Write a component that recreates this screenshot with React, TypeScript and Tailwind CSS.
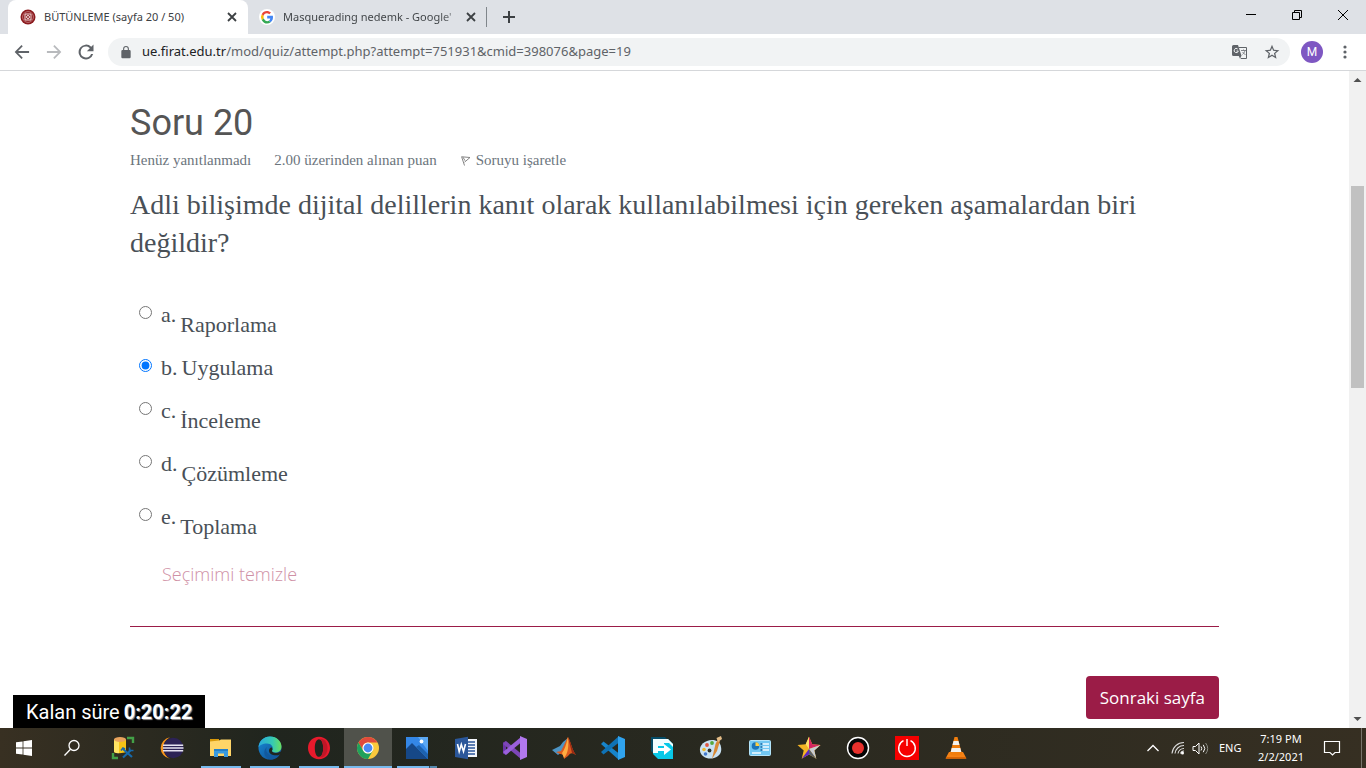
import type { ReactNode } from "react";
import { useState } from "react";

const SERIF = "font-['Georgia','Liberation_Serif',serif]";
const UI = "font-['Segoe_UI','Open_Sans',sans-serif]";
const CHROME = "font-['Segoe_UI','Noto_Sans',sans-serif]";

type Option = { letter: string; text: string; lowered: boolean };

const OPTIONS: Option[] = [
  { letter: "a.", text: "Raporlama", lowered: true },
  { letter: "b.", text: "Uygulama", lowered: false },
  { letter: "c.", text: "İnceleme", lowered: true },
  { letter: "d.", text: "Çözümleme", lowered: true },
  { letter: "e.", text: "Toplama", lowered: true },
];

function Svg({ size = 24, box = "0 0 24 24", children }: { size?: number; box?: string; children: ReactNode }) {
  return (
    <svg width={size} height={size} viewBox={box} fill="none" aria-hidden="true" className="shrink-0">
      {children}
    </svg>
  );
}

function CloseIcon() {
  return (
    <Svg size={10} box="0 0 10 10">
      <path d="M1 1l8 8M9 1l-8 8" stroke="#3c4043" strokeWidth="1.8" />
    </Svg>
  );
}

function GoogleIcon() {
  return (
    <Svg size={16} box="0 0 16 16">
      <circle cx="8" cy="8" r="8" fill="#fff" />
      <path d="M8.200 6.800h5.700c.5 3-.5 5.200-2.200 6.500l-2-1.500c.8-.5 1.400-1.300 1.600-2.400H8.200z" fill="#4285f4" />
      <path d="M2.700 10.900l2-1.600c1 2.800 3.600 3.500 5 2.500l2 1.500c-2.900 2.300-7.100 1.500-9-2.400z" fill="#34a853" />
      <path d="M2.700 5.200a6.100 6.100 0 000 5.700l2-1.600a4 4 0 010-2.600z" fill="#fbbc05" />
      <path d="M2.700 5.200c1.900-3.600 6.400-4.200 9.300-1.600l-1.700 1.700C8.300 3.600 5.500 4.300 4.700 6.700z" fill="#ea4335" />
    </Svg>
  );
}

function UniversityIcon() {
  return (
    <Svg size={16} box="0 0 16 16">
      <circle cx="8" cy="8" r="7.500" fill="#8b1a1e" />
      <circle cx="8" cy="8" r="5.400" stroke="#c98486" strokeWidth=".8" />
      <path d="M5 5h6v6H5z" stroke="#f2dfdf" strokeWidth="1" />
      <circle cx="8" cy="8" r="1.500" stroke="#f2dfdf" strokeWidth="1" />
    </Svg>
  );
}

function BrowserTabs() {
  const win = "flex h-[30px] w-[46px] items-center justify-center";
  return (
    <header className={`flex h-[34px] shrink-0 items-stretch bg-[#dee1e6] pl-2 ${CHROME}`}>
      <div className="flex w-[240px] items-center rounded-t-lg bg-white pr-[11px] pl-3">
        <UniversityIcon />
        <span className="ml-2 flex-1 truncate text-[11px] text-[#3c4043]">BÜTÜNLEME (sayfa 20 / 50)</span>
        <button type="button" aria-label="Sekmeyi kapat"><CloseIcon /></button>
      </div>
      <div className="flex w-[238px] items-center pr-[10px] pl-[11px]">
        <GoogleIcon />
        <span className="ml-2 flex-1 bg-linear-to-r from-[#3c4043] from-85% to-[#c4c7cb] bg-clip-text text-[11px] whitespace-nowrap text-transparent">
          Masquerading nedemk - Google'
        </span>
        <button type="button" aria-label="Sekmeyi kapat"><CloseIcon /></button>
      </div>
      <div className="my-[7px] w-px bg-[#80868b]" />
      <button type="button" aria-label="Yeni sekme" className="flex w-[44px] items-center justify-center">
        <Svg size={12} box="0 0 12 12">
          <path d="M6 0v12M0 6h12" stroke="#3c4043" strokeWidth="2" />
        </Svg>
      </button>
      <div className="ml-auto flex">
        <button type="button" aria-label="Simge durumuna küçült" className={win}>
          <Svg size={10} box="0 0 10 10"><path d="M0 4.500h10" stroke="#000" /></Svg>
        </button>
        <button type="button" aria-label="Önceki boyut" className={win}>
          <Svg size={10} box="0 0 10 10"><path d="M.5 2.500h7v7h-7zM2.500 2.500v-2h7v7h-2" stroke="#000" /></Svg>
        </button>
        <button type="button" aria-label="Kapat" className={win}>
          <Svg size={10} box="0 0 10 10"><path d="M0 0l10 10M10 0L0 10" stroke="#000" /></Svg>
        </button>
      </div>
    </header>
  );
}

function Toolbar() {
  return (
    <div className={`flex h-[37px] shrink-0 items-center border-b border-[#d5d7da] bg-white pr-[13px] pl-3 ${CHROME}`}>
      <button type="button" aria-label="Geri" className="w-8">
        <Svg size={20}><path d="M20.500 10.800H7.300l5.600-5.600-1.500-1.500L3.200 12l8.200 8.300 1.500-1.500-5.600-5.600h13.200z" fill="#5f6368" /></Svg>
      </button>
      <button type="button" aria-label="İleri" className="w-8">
        <Svg size={20}><path d="M3.500 10.800h13.200l-5.600-5.600 1.500-1.500 8.200 8.300-8.200 8.300-1.500-1.500 5.600-5.600H3.500z" fill="#b8babd" /></Svg>
      </button>
      <button type="button" aria-label="Yenile" className="w-8">
        <Svg size={20}>
          <path d="M18.300 5.700A8.900 8.900 0 1020.600 14.500h-2.500A6.500 6.500 0 1112 5.500c1.800 0 3.400.7 4.600 1.900L13 11h8V3z" fill="#5f6368" />
        </Svg>
      </button>
      <div className="flex h-7 min-w-0 flex-1 items-center rounded-full bg-[#f1f3f4] pr-[10px] pl-[11px]">
        <Svg size={14}>
          <path d="M18 8.500h-1V6.500a5 5 0 00-10 0v2H6A2 2 0 004 10.500v10a2 2 0 002 2h12a2 2 0 002-2v-10a2 2 0 00-2-2zM8.900 8.500V6.500a3.100 3.100 0 016.200 0v2z" fill="#5f6368" />
        </Svg>
        <span className="ml-[9px] flex-1 truncate text-[13px] text-[#5f6368]">
          <span className="text-[#202124]">ue.firat.edu.tr</span>/mod/quiz/attempt.php?attempt=751931&amp;cmid=398076&amp;page=19
        </span>
        <button type="button" aria-label="Bu sayfayı çevir">
          <Svg size={16} box="0 0 16 16">
            <path d="M6.500 3.500h8v11H8.800" stroke="#5f6368" />
            <path d="M1.500 1H6l3.600 11H1.500A1.500 1.500 0 010 10.500v-8A1.500 1.500 0 011.500 1z" fill="#5f6368" />
            <path d="M6.800 12h2.500L8 14.800z" fill="#5f6368" />
            <path d="M5.700 5A2.100 2.100 0 106.300 7H4.500" stroke="#f1f3f4" />
            <path d="M9 6.500h5M11.500 5.500v1M13 6.500c-.5 2-1.500 3-2.500 4M10.500 8l3 3" stroke="#777b80" strokeWidth=".9" />
          </Svg>
        </button>
        <button type="button" aria-label="Yer işareti ekle" className="ml-4">
          <Svg size={16}>
            <path d="M23 9.200l-7.900-.7L12 1.200 8.900 8.500 1 9.200l6 5.200-1.800 7.700L12 18l6.800 4.100-1.800-7.700zM12 15.900l-4 2.400 1.100-4.500-3.600-3.100 4.700-.4L12 6l1.800 4.300 4.700.4-3.600 3.100L16 18.300z" fill="#5f6368" />
          </Svg>
        </button>
      </div>
      <button type="button" aria-label="Profil" className="ml-[11px] flex size-[22px] items-center justify-center rounded-full bg-[#7e57c2] font-['Roboto',sans-serif] text-[12px] text-white">
        M
      </button>
      <button type="button" aria-label="Menü" className="ml-[14px]">
        <Svg size={16} box="0 0 16 16">
          <g fill="#5f6368"><circle cx="8" cy="3" r="1.600" /><circle cx="8" cy="8" r="1.600" /><circle cx="8" cy="13" r="1.600" /></g>
        </Svg>
      </button>
    </div>
  );
}

function Question() {
  const [choice, setChoice] = useState("b.");
  return (
    <form className="px-[130px] pt-[30px]" onSubmit={(e) => e.preventDefault()}>
      <h1 className="font-['Roboto',sans-serif] text-4xl leading-[44px] text-[#555]">Soru 20</h1>
      <div className={`flex h-[30px] items-center text-[15px] text-[#6c757d] ${SERIF}`}>
        <span>Henüz yanıtlanmadı</span>
        <span className="ml-[23px]">2.00 üzerinden alınan puan</span>
        <a href="#flag" className="ml-[23px] flex items-center gap-1">
          <Svg size={12} box="0 0 12 12">
            <path d="M1.500 2.500l3 9M2 2.800l8 .7-5.500 4.700M3 3.200l2 3.500" stroke="#777" strokeWidth=".9" />
          </Svg>
          Soruyu işaretle
        </a>
      </div>
      <p id="question" className={`mt-[11px] text-[28px] leading-[38px] text-[#495057] ${SERIF}`}>
        Adli bilişimde dijital delillerin kanıt olarak kullanılabilmesi için gereken aşamalardan biri değildir?
      </p>
      <div
        role="radiogroup"
        aria-labelledby="question"
        className={`mt-[38px] pl-[9px] text-[22px] leading-[30px] text-[#495057] ${SERIF}`}
      >
        {OPTIONS.map((o) => (
          <div key={o.letter} className="flex items-start pb-[13px]">
            <input
              type="radio"
              name="answer"
              id={`answer-${o.letter}`}
              checked={choice === o.letter}
              onChange={() => setChoice(o.letter)}
              className="mt-[6px] mr-[9px] size-[13px]"
            />
            <label htmlFor={`answer-${o.letter}`} className="flex gap-1">
              <span>{o.letter}</span>
              <span className={o.lowered ? "pt-[10px]" : ""}>{o.text}</span>
            </label>
          </div>
        ))}
      </div>
      <a
        href="#clear"
        onClick={() => setChoice("")}
        className={`mt-1 ml-8 inline-block text-[18px] leading-[30px] font-light text-[#cf91a6] ${UI}`}
      >
        Seçimimi temizle
      </a>
      <hr className="mt-[37px] h-px border-0 bg-[#9b1c47]" />
      <div className="mt-[49px] flex justify-end">
        <button type="submit" className={`h-[43px] rounded bg-[#9b1c47] px-[14px] text-[17px] text-white ${UI}`}>
          Sonraki sayfa
        </button>
      </div>
    </form>
  );
}

function Scrollbar() {
  return (
    <div className="flex w-[17px] shrink-0 flex-col items-center bg-[#f1f1f1]" aria-hidden="true">
      <div className="flex h-[17px] items-center"><Svg size={9} box="0 0 9 9"><path d="M.5 7l4-4 4 4z" fill="#505050" /></Svg></div>
      <div className="grow-[98]" />
      <div className="w-[13px] grow-[202] bg-[#c1c1c1]" />
      <div className="grow-[323]" />
      <div className="flex h-[17px] items-center"><Svg size={9} box="0 0 9 9"><path d="M.5 2l4 4 4-4z" fill="#505050" /></Svg></div>
    </div>
  );
}

type AppEntry = { name: string; icon: ReactNode; running?: boolean; active?: boolean; stacked?: boolean };

const APPS: AppEntry[] = [
  {
    name: "SQL Server Management Studio",
    icon: (
      <Svg>
        <path d="M16 2h6v5M2 17v5h5" stroke="#43a047" strokeWidth="2.400" />
        <path d="M3 3.500v12.500c2 1.500 9 1.500 12 0V3.500z" fill="#f6c416" />
        <path d="M3 3.500v12.500c1 .8 3 1.200 5 1.300V4z" fill="#ffe463" />
        <ellipse cx="9" cy="3.500" rx="6" ry="2.500" fill="#e8a35c" />
        <path d="M12 13l9 8M20 14l-8 7.500" stroke="#1769aa" strokeWidth="2.200" />
        <path d="M10 14.500l2-2.500 2 1M18.500 11.500v3h4" stroke="#1769aa" strokeWidth="1.600" />
      </Svg>
    ),
  },
  {
    name: "Eclipse",
    icon: (
      <Svg>
        <path d="M10 1.300a10.800 10.800 0 000 21.400A12 12 0 0110 1.300z" fill="#f7941e" />
        <circle cx="13.300" cy="12" r="10.200" fill="#2c2255" />
        <path d="M3 9.200h20.200M3 12h20.500M3 14.700h20.200" stroke="#e6e3f1" strokeWidth="1.600" />
      </Svg>
    ),
  },
  {
    name: "Dosya Gezgini",
    running: true,
    icon: (
      <Svg>
        <path d="M1 3h9v4H1z" fill="#d99a0b" />
        <path d="M1 5.500l9-1 2-1h10V20H1z" fill="#ffd568" />
        <path d="M5 13h14v8h-4v-3.500H9V21H5z" fill="#3a9be0" />
        <path d="M5 13h14v2H5z" fill="#2380ca" />
      </Svg>
    ),
  },
  {
    name: "Microsoft Edge",
    running: true,
    icon: (
      <Svg>
        <defs>
          <linearGradient id="edge-top" x1="0" x2="1"><stop stopColor="#2aa9dc" /><stop offset=".6" stopColor="#35c9b4" /><stop offset="1" stopColor="#6adf5f" /></linearGradient>
          <linearGradient id="edge-low" x1="0" x2="1" y2="1"><stop stopColor="#1689d8" /><stop offset="1" stopColor="#114a8b" /></linearGradient>
        </defs>
        <circle cx="12" cy="12" r="11.500" fill="url(#edge-low)" />
        <path d="M.5 11.500C1 4.500 6 .5 12 .5c7 0 11.500 5 11.500 10 0 4-3 6-6 6-3.500 0-4.500-1.500-3-3 1-3-1.500-6-5.500-6-4.500 0-7.500 2-8.500 4z" fill="url(#edge-top)" />
        <path d="M9 11c-2.500 4 1.500 9.500 8 9 2 0 4-1 5-2-2 4-6 5.700-10 5.500C5 21.500 5 13.500 9 11z" fill="#12599e" />
        <path d="M14.500 13.500c-2 3 3 4.500 7.500 2.500l2-1v3l-2 .2c-3 2.300-11 1.300-11-3.700 0-2 1.500-3.500 3-3z" fill="#20251e" />
      </Svg>
    ),
  },
  {
    name: "Opera",
    running: true,
    icon: (
      <Svg>
        <path d="M12 .8C5.500.8 1 5.800 1 12s4.500 11.200 11 11.200S23 18.200 23 12 18.500.8 12 .8zm0 2.400c2.600 0 4.200 3.600 4.200 8.800s-1.600 8.800-4.200 8.800S7.800 17.200 7.800 12 9.400 3.200 12 3.200z" fill="#e81a2c" fillRule="evenodd" />
        <path d="M12 3.200c4-2 8.500 2 8.500 8.800S16 22.800 12 20.800c2.600 0 4.200-3.600 4.200-8.800S14.600 3.200 12 3.200z" fill="#c01627" />
      </Svg>
    ),
  },
  {
    name: "Google Chrome",
    running: true,
    active: true,
    icon: (
      <Svg>
        <circle cx="12" cy="12" r="11" fill="#fbc93c" />
        <path d="M2.470 6.500A11 11 0 0121.500 6.500H12a5.500 5.500 0 00-4.800 8.200z" fill="#df4a3c" />
        <path d="M2.470 6.500A11 11 0 0012 23l4.800-8.300a5.500 5.500 0 01-9.600 0z" fill="#1fa15d" />
        <circle cx="12" cy="12" r="5.500" fill="#fff" />
        <circle cx="12" cy="12" r="4.400" fill="#4a89f3" />
      </Svg>
    ),
  },
  {
    name: "Fotoğraflar",
    running: true,
    stacked: true,
    icon: (
      <Svg>
        <path d="M1 1h22v22H1z" fill="#3487e6" />
        <path d="M13 1h10v14z" fill="#5ba8f4" />
        <path d="M1 13l6-6 16 16H1z" fill="#164887" />
        <path d="M11 11l3-2 9 9v5z" fill="#1d62ae" />
        <circle cx="16.500" cy="5.500" r="1.900" fill="#fff" />
      </Svg>
    ),
  },
  {
    name: "Word",
    icon: (
      <Svg>
        <path d="M13 3h10v18H13z" fill="#f4f7fc" />
        <path d="M14 6h7M14 9h7M14 12h7M14 15h7M14 18h7" stroke="#2b579a" strokeWidth="1.300" />
        <path d="M1 3L14 .8v22.400L1 21z" fill="#2b579a" />
        <path d="M3.500 8l1.700 7.500L7.300 8.500l2.200 7L11.500 8" stroke="#fff" strokeWidth="1.600" />
      </Svg>
    ),
  },
  {
    name: "Visual Studio",
    icon: (
      <Svg>
        <path d="M0 6.500L3 5v14l-3-1.500z" fill="#6b35a8" />
        <path d="M3 5l15 12.500V23L0 8z" fill="#7d46b8" />
        <path d="M3 19L18 6.500V1L0 16z" fill="#9a60dc" />
        <path d="M17 0l7 3v18l-7 3z" fill="#b178ee" />
      </Svg>
    ),
  },
  {
    name: "MATLAB",
    icon: (
      <Svg>
        <path d="M0 14l8-4 3-4 5-4-5 13-5 4z" fill="#4d94c4" />
        <path d="M4 16l5-1 7-14c3 5 4 13 8 18-4-3-6-2-8 1l-4 3c0-4-2-5-4-5z" fill="#dc5b1f" />
        <path d="M16 1c-2 8-3 12-6 16l2 5c4-4 5-12 4-21z" fill="#ffad42" />
        <path d="M16 1c3 5 4 13 8 18l-4-2z" fill="#982913" />
      </Svg>
    ),
  },
  {
    name: "Visual Studio Code",
    icon: (
      <Svg>
        <path d="M0 8l2.500-2.500L18 17.500V24L0 8z" fill="#1784ca" />
        <path d="M0 16l2.500 2.500L18 6.500V0L0 16z" fill="#0f72b5" />
        <path d="M17 0l7 3v18l-7 3z" fill="#30a3ee" />
      </Svg>
    ),
  },
  {
    name: "Aktarım",
    icon: (
      <Svg>
        <path d="M1 1h14l3 3v14H4l-3-3z" fill="#064c67" />
        <path d="M3 3h15l5 5v15H8l-5-5z" fill="#08c8e8" />
        <path d="M3 3h15l5 5v3l-4-4h-5v3H8v7H3z" fill="#f2fdff" />
        <path d="M7 12h7V8l7 5.500-7 5.500v-4H7z" fill="#fff" />
      </Svg>
    ),
  },
  {
    name: "Paint",
    icon: (
      <Svg>
        <path d="M13 4C6 4 0 9 1 15s8 9 14 7 8-6 7-11-4-7-9-7z" fill="#c9e2f3" />
        <circle cx="8" cy="9" r="1.900" fill="#df5640" /><circle cx="5" cy="13.500" r="1.800" fill="#eeb82f" />
        <circle cx="13" cy="7" r="1.900" fill="#56a83c" />
        <circle cx="6.500" cy="18" r="1.800" fill="#4279cd" />
        <circle cx="10.500" cy="14.500" r="1.900" fill="#2d302a" />
        <path d="M13 23l3.500-15 2-4 2.500 1-3 10z" fill="#d98935" /><path d="M17.500 2l4.500-2 1 3-4 3z" fill="#e4bd87" />
      </Svg>
    ),
  },
  {
    name: "Denetim Masası",
    icon: (
      <Svg>
        <rect x="1.500" y="4.500" width="21" height="15" rx="1" fill="#72c7f2" stroke="#b3e4fa" />
        <circle cx="7.500" cy="10" r="3.800" fill="#1b75b9" /><path d="M7.500 10V6.200A3.800 3.800 0 0111.300 10z" fill="#ffd045" />
        <path d="M14 8h7M14 11h7M14 14h7" stroke="#f4fbff" strokeWidth="1.600" /><path d="M12.500 8h2M12.500 11h2M12.500 14h2" stroke="#176aa5" strokeWidth="1.500" />
        <path d="M4 17h9" stroke="#f4fbff" strokeWidth="1.500" />
      </Svg>
    ),
  },
  {
    name: "StarUML",
    icon: (
      <Svg>
        <path d="M12 .8l3.300 7.500 8.200.7-6.200 5.400 2 8.300L12 18.500l-7.300 4.200 2-8.300L.5 9l8.200-.7z" fill="#f5b524" />
        <path d="M12 .8l3.300 7.500 8.200.7L12 13z" fill="#d72562" />
        <path d="M23.500 9L12 13l7.300 9.700-2-8.300z" fill="#c9ccd2" />
        <path d="M12 13v5.500l-7.300 4.200z" fill="#5b28c3" /><path d="M12 13v5.500l7.300 4.200z" fill="#59606a" />
        <path d="M12 .8V13L8.700 8.300z" fill="#ffe06b" />
      </Svg>
    ),
  },
  {
    name: "Ekran Kaydedici",
    icon: (
      <Svg>
        <circle cx="12" cy="12" r="10.500" fill="#050505" stroke="#fff" strokeWidth="1.400" />
        <circle cx="12" cy="12" r="6" fill="#e7302c" />
      </Svg>
    ),
  },
  {
    name: "Kapat",
    icon: (
      <Svg>
        <path d="M0 0h24v24H0z" fill="#f60000" />
        <path d="M8.500 4.700a8.300 8.300 0 107 0M12 3v7" stroke="#fff" strokeWidth="1.400" />
      </Svg>
    ),
  },
  {
    name: "VLC",
    icon: (
      <Svg>
        <path d="M5 16h14l3.500 6.500h-21z" fill="#f58216" />
        <path d="M10.500 1h3L18 18c-3 2-9 2-12 0z" fill="#f07d0d" />
        <path d="M9.500 5h5l1 4h-7zM7.700 12h8.600l1 4H6.700z" fill="#f3f2ef" />
        <path d="M2 21h20v1.800H2z" fill="#d66505" />
      </Svg>
    ),
  },
];

function Taskbar() {
  return (
    <footer className={`flex h-10 shrink-0 items-stretch bg-linear-to-r from-[#383022] via-[#20251e] via-20% to-[#362f22] text-[11px] text-white ${CHROME}`}>
      <button type="button" aria-label="Başlat" className="flex w-12 items-center justify-center">
        <Svg size={16} box="0 0 16 16">
          <path d="M0 2.300L6.600 1.400V7.600H0zM7.400 1.300L16 0V7.600H7.400zM0 8.400H6.600V14.600L0 13.700zM7.400 8.400H16V16L7.400 14.700z" fill="#fff" />
        </Svg>
      </button>
      <button type="button" aria-label="Ara" className="flex w-12 items-center justify-center">
        <Svg size={18} box="0 0 18 18">
          <circle cx="11" cy="6.500" r="5" stroke="#fff" strokeWidth="1.300" /><path d="M7.500 10.200L1.500 16.500" stroke="#fff" strokeWidth="1.300" />
        </Svg>
      </button>
      <nav className="ml-[3px] flex gap-px" aria-label="Uygulamalar">
        {APPS.map((a) => (
          <button
            key={a.name}
            type="button"
            aria-label={a.name}
            className={`flex w-12 flex-col items-center pt-2 ${a.active ? "bg-[#50524b]" : ""}`}
          >
            {a.icon}
            {a.running && (
              <span className={`mt-[6px] flex h-[2px] bg-[#76b9ed] ${a.active ? "w-full" : "w-10"}`}>
                {a.stacked && <span className="ml-auto h-full w-2 border-l border-[#2f4a5e] bg-[#5488ad]" />}
              </span>
            )}
          </button>
        ))}
      </nav>
      <div className="ml-auto flex items-center">
        <button type="button" aria-label="Gizli simgeler">
          <Svg size={14} box="0 0 14 14"><path d="M1.500 10L7 4.500 12.500 10" stroke="#fff" strokeWidth="1.300" /></Svg>
        </button>
        <button type="button" aria-label="Ağ" className="ml-[11px]">
          <Svg size={14} box="0 0 14 14">
            <path d="M1 12.500A12 12 0 0113 1.500M4 12.500a9 9 0 019-8M7 12.500a6 6 0 016-5M9.500 12.500a3.500 3.500 0 013.500-2.500" stroke="#ddd" strokeWidth="1.100" />
            <circle cx="11.500" cy="12" r="1.500" fill="#fff" />
          </Svg>
        </button>
        <button type="button" aria-label="Ses" className="ml-[7px]">
          <Svg size={17} box="0 0 17 17">
            <path d="M1 6.500h2.500L7 3v11L3.500 10.500H1zM9 6.500q1.500 2 0 4M11.300 4.800q3 3.700 0 7.400" stroke="#fff" />
            <path d="M13.600 3q4.200 5.500 0 11" stroke="#8b8c84" />
          </Svg>
        </button>
        <span className="ml-[10px] w-6">ENG</span>
        <div className="ml-[10px] flex w-[56px] flex-col items-center leading-[18px] whitespace-nowrap">
          <span>7:19 PM</span>
          <span>2/2/2021</span>
        </div>
        <button type="button" aria-label="Bildirimler" className="ml-[14px]">
          <Svg size={18} box="0 0 18 18"><path d="M1.500 2.500h15v11h-4.500l-2.500 2.500L7 13.500H1.500z" stroke="#fff" strokeWidth="1.200" /></Svg>
        </button>
        <div className="ml-5 h-10 w-px bg-[#77746b]" />
        <div className="w-1" />
      </div>
    </footer>
  );
}

export default function App() {
  return (
    <div className={`flex h-screen flex-col bg-white ${UI}`}>
      <BrowserTabs />
      <Toolbar />
      <div className="relative flex min-h-0 flex-1">
        <main className="min-w-0 flex-1 overflow-hidden">
          <Question />
        </main>
        <Scrollbar />
        <div className="absolute bottom-0 left-[13px] flex h-[33px] items-center gap-1 bg-black px-[13px] font-['Roboto',sans-serif] text-xl text-white">
          <span>Kalan süre</span>
          <span className="font-bold [text-shadow:1px_1px_1px_#999]">0:20:22</span>
        </div>
      </div>
      <Taskbar />
    </div>
  );
}
